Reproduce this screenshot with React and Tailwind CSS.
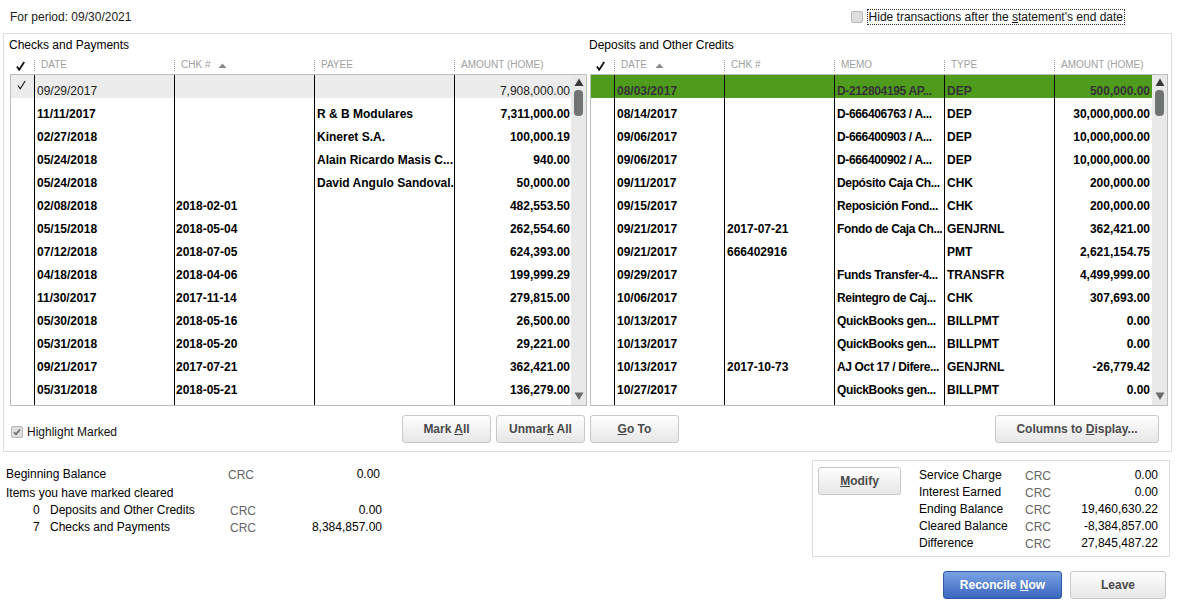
import React from 'react';

const leftRows = [
  ['09/29/2017', '', '', '7,908,000.00'],
  ['11/11/2017', '', 'R & B Modulares', '7,311,000.00'],
  ['02/27/2018', '', 'Kineret S.A.', '100,000.19'],
  ['05/24/2018', '', 'Alain Ricardo Masis C...', '940.00'],
  ['05/24/2018', '', 'David Angulo Sandoval.', '50,000.00'],
  ['02/08/2018', '2018-02-01', '', '482,553.50'],
  ['05/15/2018', '2018-05-04', '', '262,554.60'],
  ['07/12/2018', '2018-07-05', '', '624,393.00'],
  ['04/18/2018', '2018-04-06', '', '199,999.29'],
  ['11/30/2017', '2017-11-14', '', '279,815.00'],
  ['05/30/2018', '2018-05-16', '', '26,500.00'],
  ['05/31/2018', '2018-05-20', '', '29,221.00'],
  ['09/21/2017', '2017-07-21', '', '362,421.00'],
  ['05/31/2018', '2018-05-21', '', '136,279.00'],
  ['', '', '', ''],
];

const rightRows = [
  ['08/03/2017', '', 'D-212804195 AP...', 'DEP', '500,000.00'],
  ['08/14/2017', '', 'D-666406763 / A...', 'DEP', '30,000,000.00'],
  ['09/06/2017', '', 'D-666400903 / A...', 'DEP', '10,000,000.00'],
  ['09/06/2017', '', 'D-666400902 / A...', 'DEP', '10,000,000.00'],
  ['09/11/2017', '', 'Depósito Caja Ch...', 'CHK', '200,000.00'],
  ['09/15/2017', '', 'Reposición Fond...', 'CHK', '200,000.00'],
  ['09/21/2017', '2017-07-21', 'Fondo de Caja Ch...', 'GENJRNL', '362,421.00'],
  ['09/21/2017', '666402916', '', 'PMT', '2,621,154.75'],
  ['09/29/2017', '', 'Funds Transfer-4...', 'TRANSFR', '4,499,999.00'],
  ['10/06/2017', '', 'Reintegro de Caj...', 'CHK', '307,693.00'],
  ['10/13/2017', '', 'QuickBooks gen...', 'BILLPMT', '0.00'],
  ['10/13/2017', '', 'QuickBooks gen...', 'BILLPMT', '0.00'],
  ['10/13/2017', '2017-10-73', 'AJ Oct 17 / Difere...', 'GENJRNL', '-26,779.42'],
  ['10/27/2017', '', 'QuickBooks gen...', 'BILLPMT', '0.00'],
  ['', '', '', '', ''],
];

function Check({ className = '', bold = false }) {
  return (
    <svg width="9" height="10" viewBox="0 0 9 10" className={className}>
      <path d="M1 5.5 L3.2 8.8 L8.2 1" fill="none" stroke="#111" strokeWidth={bold ? 1.8 : 1.1} />
    </svg>
  );
}

function SortUp() {
  return (
    <svg width="9" height="5" viewBox="0 0 9 5" className="ml-[8px]">
      <path d="M0.5 5 L4.5 0.5 L8.5 5 Z" fill="#8a8a8a" />
    </svg>
  );
}

function HeadCell({ width, label, sort }) {
  return (
    <div className={`${width} flex items-center h-[12px]`}>
      <div className="h-[11px] border-l border-dotted border-[#9a9a9a]" />
      <span className="pl-[6px] text-[10px] leading-[12px] text-[#a0a0a0]">{label}</span>
      {sort && <SortUp />}
    </div>
  );
}

function Scrollbar() {
  return (
    <div className="w-[15px] bg-[#e9e9e9] flex flex-col items-center">
      <svg width="10" height="8" viewBox="0 0 10 8" className="mt-[3px]">
        <path d="M0.5 8 L5 0.5 L9.5 8 Z" fill="#3a3a3a" />
      </svg>
      <div className="mt-[4px] w-[9px] h-[26px] rounded-[4px] bg-[#6f7371]" />
      <div className="flex-1" />
      <svg width="10" height="8" viewBox="0 0 10 8" className="mb-[5px]">
        <path d="M0.5 0.5 L9.5 0.5 L5 8 Z" fill="#6a6a6a" />
      </svg>
    </div>
  );
}

function Btn({ className = '', children }) {
  return (
    <button className={`h-[28px] rounded-[3px] border border-[#c9c9c9] bg-linear-to-b from-[#fefefe] to-[#e7e7e7] text-[12px] font-bold text-[#4a4a4a] ${className}`}>
      <span>{children}</span>
    </button>
  );
}

function Cb({ checked }) {
  return (
    <div className="w-[12px] h-[12px] rounded-[2px] border border-[#b8b8b8] bg-[#dedede] flex items-center justify-center">
      {checked && (
        <svg width="8" height="8" viewBox="0 0 8 8">
          <path d="M1 4.2 L3 6.3 L7 1.5" fill="none" stroke="#666" strokeWidth="1.5" />
        </svg>
      )}
    </div>
  );
}

export default function App() {
  return (
    <div className="w-[1181px] h-[610px] bg-white overflow-hidden text-[12px] text-black font-['Liberation_Sans',Arial,sans-serif]">
      {/* top bar */}
      <div className="h-[33px] flex items-center justify-between pl-[10px] pr-[56px]">
        <span className="text-[#222]">For period: 09/30/2021</span>
        <div className="flex items-center gap-[4px]">
          <Cb />
          <span className="border border-dotted border-[#333] px-[1px] leading-[14px] text-[#111]">
            Hide transactions after the <u className="underline">s</u>tatement's end date
          </span>
        </div>
      </div>

      {/* main panel */}
      <div className="ml-[3px] w-[1169px] h-[419px] border border-[#dedede]">
        <div className="flex pl-[6px] gap-[3px] pt-[4px]">
          {/* Checks and Payments */}
          <div className="w-[577px]">
            <div className="leading-[14px] -ml-[1px]">Checks and Payments</div>
            <div className="h-[22px] flex items-end pb-[3px] pl-[1px]">
              <div className="w-[23px] flex justify-center pr-[4px]"><Check bold /></div>
              <HeadCell width="w-[140px]" label="DATE" />
              <HeadCell width="w-[140px]" label="CHK #" sort />
              <HeadCell width="w-[140px]" label="PAYEE" />
              <HeadCell width="w-[117px]" label="AMOUNT (HOME)" />
            </div>
            <div className="h-[332px] border border-[#bdbdbd] flex overflow-hidden">
              <div className="w-[560px] flex flex-col">
                {leftRows.map((r, i) => {
                  const marked = i === 0;
                  const bg = marked ? 'bg-[#ececec]' : '';
                  const txt = marked ? 'font-normal text-[#222]' : 'font-bold';
                  return (
                    <div key={i} className={`flex h-[23px] shrink-0 ${bg} ${txt}`}>
                      <div className="w-[23px] flex justify-center pt-[5px] pr-[2px]">{marked && <Check />}</div>
                      <div className="w-[140px] border-l border-black pl-[2px] pt-[9px] leading-[14px] whitespace-nowrap overflow-hidden">{r[0]}</div>
                      <div className="w-[140px] border-l border-black pl-[1px] pt-[9px] leading-[14px] whitespace-nowrap overflow-hidden">{r[1]}</div>
                      <div className="w-[140px] border-l border-black pl-[2px] pt-[9px] leading-[14px] whitespace-nowrap overflow-hidden">{r[2]}</div>
                      <div className="w-[117px] border-l border-black pr-[1px] pt-[9px] leading-[14px] text-right whitespace-nowrap overflow-hidden">{r[3]}</div>
                    </div>
                  );
                })}
              </div>
              <Scrollbar />
            </div>
          </div>

          {/* Deposits and Other Credits */}
          <div className="w-[578px]">
            <div className="leading-[14px] -ml-[1px]">Deposits and Other Credits</div>
            <div className="h-[22px] flex items-end pb-[3px] pl-[1px]">
              <div className="w-[23px] flex justify-center pr-[4px]"><Check bold /></div>
              <HeadCell width="w-[110px]" label="DATE" sort />
              <HeadCell width="w-[110px]" label="CHK #" />
              <HeadCell width="w-[110px]" label="MEMO" />
              <HeadCell width="w-[110px]" label="TYPE" />
              <HeadCell width="w-[98px]" label="AMOUNT (HOME)" />
            </div>
            <div className="h-[332px] border border-[#bdbdbd] flex overflow-hidden">
              <div className="w-[561px] flex flex-col">
                {rightRows.map((r, i) => {
                  const sel = i === 0;
                  const bg = sel ? 'bg-[#4f9b1c] text-[#333]' : '';
                  return (
                    <div key={i} className={`flex h-[23px] shrink-0 font-bold ${bg}`}>
                      <div className="w-[23px]" />
                      <div className="w-[110px] border-l border-black pl-[2px] pt-[9px] leading-[14px] whitespace-nowrap overflow-hidden">{r[0]}</div>
                      <div className="w-[110px] border-l border-black pl-[2px] pt-[9px] leading-[14px] whitespace-nowrap overflow-hidden">{r[1]}</div>
                      <div className="w-[110px] border-l border-black pl-[2px] pt-[9px] leading-[14px] whitespace-nowrap overflow-hidden tracking-[-0.35px]">{r[2]}</div>
                      <div className="w-[110px] border-l border-black pl-[2px] pt-[9px] leading-[14px] whitespace-nowrap overflow-hidden">{r[3]}</div>
                      <div className="w-[98px] border-l border-black pr-[2px] pt-[9px] leading-[14px] text-right whitespace-nowrap overflow-hidden">{r[4]}</div>
                    </div>
                  );
                })}
              </div>
              <Scrollbar />
            </div>
          </div>
        </div>

        {/* panel controls */}
        <div className="flex items-center mt-[9px] pl-[7px] pr-[12px]">
          <div className="w-[391px] flex items-center gap-[4px] pt-[5px]">
            <Cb checked />
            <span className="text-[#111]">Highlight Marked</span>
          </div>
          <div className="flex gap-[5px]">
            <Btn className="w-[89px]">Mark <u className="underline">A</u>ll</Btn>
            <Btn className="w-[89px]">Unmar<u className="underline">k</u> All</Btn>
            <Btn className="w-[89px]"><u className="underline">G</u>o To</Btn>
          </div>
          <div className="flex-1" />
          <Btn className="w-[164px]">Columns to <u className="underline">D</u>isplay...</Btn>
        </div>
      </div>

      {/* summary */}
      <div className="flex pt-[8px]">
        <div className="pl-[6px] pt-[5px]">
          <div className="flex h-[17px] items-center">
            <span className="w-[222px]">Beginning Balance</span>
            <span className="w-[60px] text-[#666] pt-[2px]">CRC</span>
            <span className="w-[92px] text-right">0.00</span>
          </div>
          <div className="flex h-[17px] items-center mt-[2px]">
            <span>Items you have marked cleared</span>
          </div>
          <div className="flex h-[17px] items-center">
            <span className="w-[27px]" />
            <span className="w-[17px]">0</span>
            <span className="w-[180px]">Deposits and Other Credits</span>
            <span className="w-[60px] text-[#666] pt-[2px]">CRC</span>
            <span className="w-[92px] text-right">0.00</span>
          </div>
          <div className="flex h-[17px] items-center">
            <span className="w-[27px]" />
            <span className="w-[17px]">7</span>
            <span className="w-[180px]">Checks and Payments</span>
            <span className="w-[60px] text-[#666] pt-[2px]">CRC</span>
            <span className="w-[92px] text-right">8,384,857.00</span>
          </div>
        </div>

        <div className="ml-auto mr-[11px] w-[358px] h-[97px] border border-[#dedede] flex">
          <div className="pl-[5px] pt-[6px]">
            <Btn className="w-[83px] h-[27px]"><u className="underline">M</u>odify</Btn>
          </div>
          <div className="flex-1 pl-[18px] pr-[11px] pt-[5px]">
            {[
              ['Service Charge', '0.00'],
              ['Interest Earned', '0.00'],
              ['Ending Balance', '19,460,630.22'],
              ['Cleared Balance', '-8,384,857.00'],
              ['Difference', '27,845,487.22'],
            ].map(([l, v]) => (
              <div key={l} className="flex h-[17px] items-center">
                <span className="w-[106px]">{l}</span>
                <span className="w-[50px] text-[#666] pt-[2px]">CRC</span>
                <span className="flex-1 text-right">{v}</span>
              </div>
            ))}
          </div>
        </div>
      </div>

      <div className="flex justify-end gap-[8px] pr-[15px] mt-[14px]">
        <button className="w-[119px] h-[28px] rounded-[3px] border border-[#2f57a6] bg-linear-to-b from-[#7aa2e4] to-[#3a66bf] text-white font-bold text-[12px]">
          <span>Reconcile <u className="underline">N</u>ow</span>
        </button>
        <Btn className="w-[96px]">Leave</Btn>
      </div>
    </div>
  );
}
